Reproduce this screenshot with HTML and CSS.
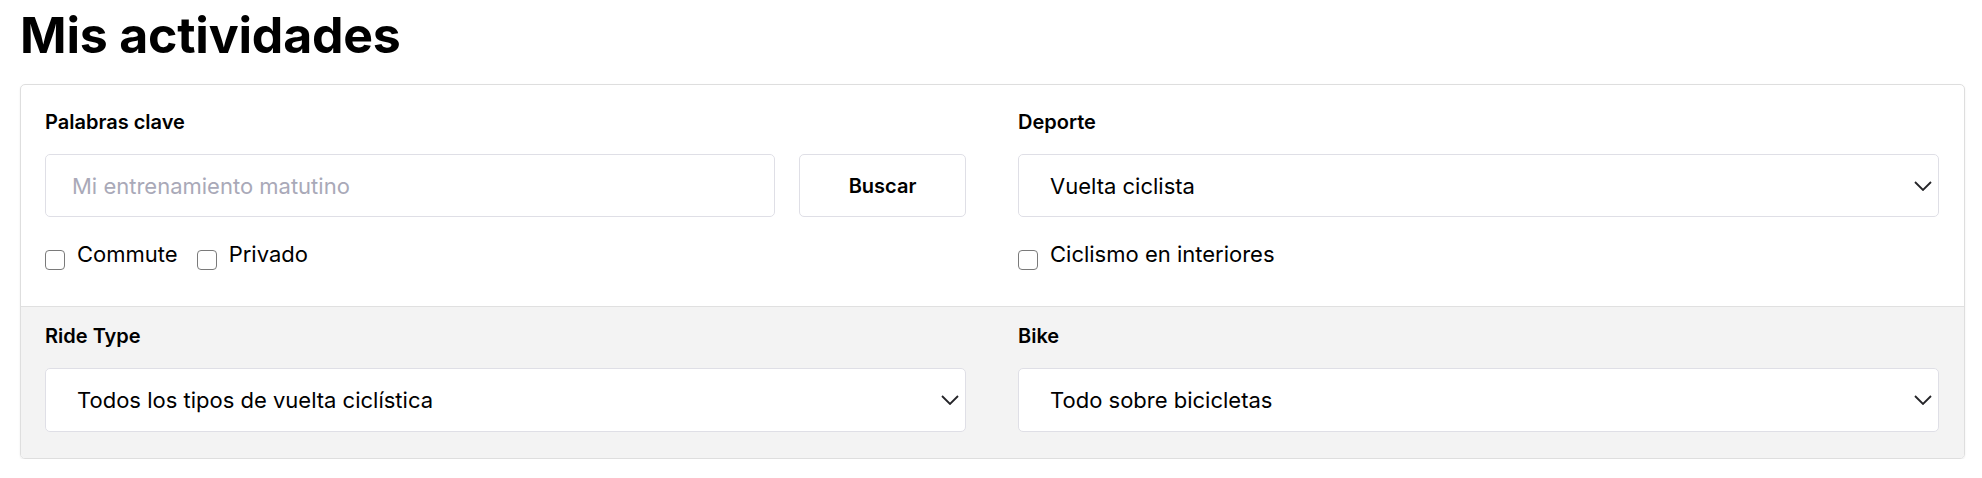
FILE: index.html
```html
<!DOCTYPE html>
<html lang="es">
<head>
<meta charset="utf-8">
<title>Mis actividades</title>
<link rel="stylesheet" href="styles.css">
</head>
<body>
<main class="page">
  <h1 class="title">Mis actividades</h1>
  <section class="card">
    <div class="section section-top">
      <div class="col">
        <label class="label">Palabras clave</label>
        <div class="search-row">
          <input class="input" type="text" placeholder="Mi entrenamiento matutino">
          <button class="btn">Buscar</button>
        </div>
        <div class="checks">
          <label class="check"><span class="box"></span><span>Commute</span></label>
          <label class="check"><span class="box"></span><span>Privado</span></label>
        </div>
      </div>
      <div class="col">
        <label class="label">Deporte</label>
        <div class="select">
          <span>Vuelta ciclista</span>
          <svg class="chev" width="18" height="10" viewBox="0 0 18 10"><path d="M1 1 L9 9 L17 1" fill="none" stroke="#242428" stroke-width="1.8"/></svg>
        </div>
        <div class="checks">
          <label class="check"><span class="box"></span><span>Ciclismo en interiores</span></label>
        </div>
      </div>
    </div>
    <div class="section section-bottom">
      <div class="col">
        <label class="label">Ride Type</label>
        <div class="select">
          <span>Todos los tipos de vuelta ciclística</span>
          <svg class="chev" width="18" height="10" viewBox="0 0 18 10"><path d="M1 1 L9 9 L17 1" fill="none" stroke="#242428" stroke-width="1.8"/></svg>
        </div>
      </div>
      <div class="col">
        <label class="label">Bike</label>
        <div class="select">
          <span>Todo sobre bicicletas</span>
          <svg class="chev" width="18" height="10" viewBox="0 0 18 10"><path d="M1 1 L9 9 L17 1" fill="none" stroke="#242428" stroke-width="1.8"/></svg>
        </div>
      </div>
    </div>
  </section>
</main>
</body>
</html>
```

FILE: styles.css
```css
* { box-sizing: border-box; }
html, body { margin: 0; padding: 0; background: #fff; }
body {
  font-family: Inter, "Noto Sans", "Liberation Sans", sans-serif;
  color: #000;
}
.page { padding: 5px 17px 0 20px; }
.title {
  margin: 0 0 19px 0;
  font-size: 50px;
  line-height: 60px;
  font-weight: 700;
  letter-spacing: -0.2px;
}
.card {
  border: 1px solid #dedede;
  border-radius: 5px;
  box-shadow: 0 1px 2px rgba(0,0,0,0.08);
  overflow: hidden;
}
.section {
  display: grid;
  grid-template-columns: 1fr 1fr;
  column-gap: 52px;
  padding: 25px 25px 0 24px;
}
.section-top { padding-bottom: 36px; }
.section-bottom {
  background: #f3f3f3;
  border-top: 1px solid #e0e0e0;
  padding-top: 17px;
  padding-bottom: 26px;
}
.label {
  display: block;
  font-size: 20px;
  line-height: 24px;
  font-weight: 600;
  margin-bottom: 20px;
}
.search-row {
  display: flex;
  gap: 24px;
}
.input {
  flex: 1;
  height: 63px;
  border: 1px solid #dfdfe6;
  border-radius: 5px;
  padding: 0 26px;
  font: inherit;
  font-size: 22px;
  color: #000;
  background: #fff;
  outline: none;
}
.input::placeholder { color: #a9a9b8; }
.btn {
  width: 167px;
  height: 63px;
  border: 1px solid #dfdfe6;
  border-radius: 5px;
  background: #fff;
  font: inherit;
  font-size: 20px;
  font-weight: 600;
  color: #000;
}
.select {
  height: 63px;
  border: 1px solid #dfdfe6;
  border-radius: 5px;
  background: #fff;
  display: flex;
  align-items: center;
  justify-content: space-between;
  padding: 0 6px 0 31px;
  font-size: 22px;
}
.section-bottom .select { height: 64px; }
.checks {
  display: flex;
  gap: 19px;
  margin-top: 25px;
}
.check {
  display: flex;
  align-items: flex-start;
  gap: 12px;
  font-size: 22px;
  line-height: 24px;
}
.box {
  width: 20px;
  height: 20px;
  border: 1.5px solid #7a7a7a;
  border-radius: 4px;
  margin-top: 8px;
  background: #fff;
}
```
